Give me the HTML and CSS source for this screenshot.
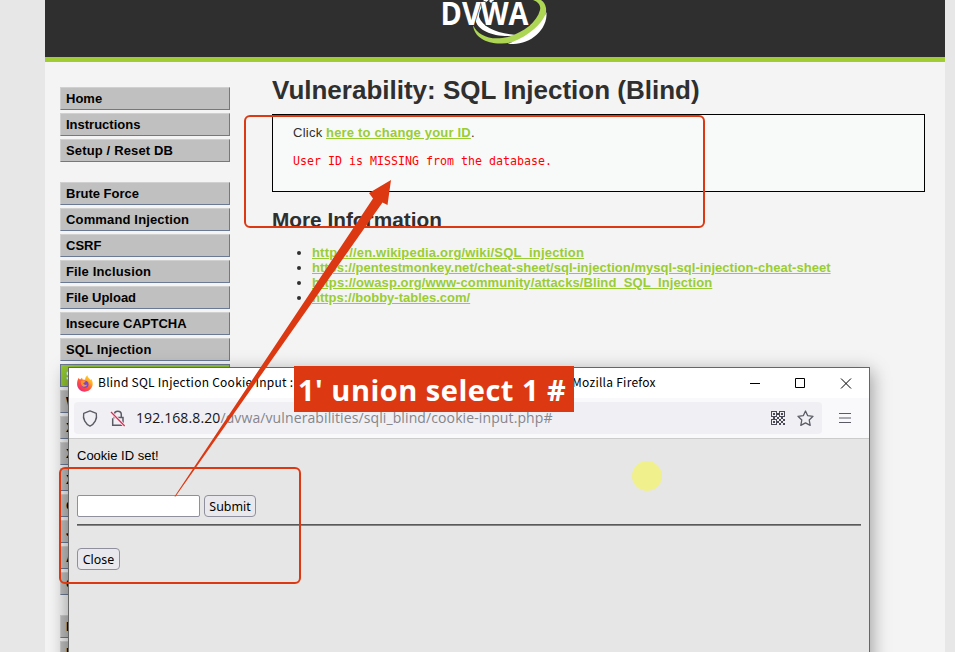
FILE: index.html
```html
<!DOCTYPE html>
<html lang="en">
<head>
<meta charset="utf-8">
<title>Vulnerability: SQL Injection (Blind)</title>
<link rel="stylesheet" href="styles.css">
</head>
<body>
<div class="container">
  <header class="header">
    <svg class="logo" width="120" height="50" viewBox="0 0 120 50">
      <path d="M34 22C37 31 54 39 79 35C58 35 41 28 37 17C37 10 41 4 48 -1L43 -1C36 6 33 14 34 22Z" fill="#fff"/>
      <path d="M31 25C32 37 44 44 60 43.500C84 43 106 26 104 8C103 4 102 2 99 0H91C97 2 99 6 98 10C95 22 82 32 66 37C49 41 36 36 31 25Z" fill="#acd653"/>
      <path d="M104.500 12C100 25 84 38 66 43.500C84 47 106 32 104.500 12Z" fill="#fff"/>
      <path d="M47 1L50 -2L52 1L49 3Z" fill="#fff"/>
      <text class="logo-text" x="-1.500" y="25" textLength="88" lengthAdjust="spacingAndGlyphs">DVWA</text>
    </svg>
  </header>
  <div class="columns">
    <nav class="menu">
      <ul>
        <li>Home</li><li>Instructions</li><li class="wide">Setup / Reset DB</li>
      </ul>
      <ul>
        <li>Brute Force</li><li class="wide">Command Injection</li><li>CSRF</li><li class="wide">File Inclusion</li><li>File Upload</li><li>Insecure CAPTCHA</li><li class="wide">SQL Injection</li><li class="selected">SQL Injection (Blind)</li><li>Weak Session IDs</li><li>XSS (DOM)</li><li>XSS (Reflected)</li><li>XSS (Stored)</li><li>CSP Bypass</li><li>JavaScript</li><li>Authorisation Bypass</li><li>Open HTTP Redirect</li>
      </ul>
      <ul>
        <li>DVWA Security</li><li>PHP Info</li>
      </ul>
    </nav>
    <main class="main">
      <h1>Vulnerability: SQL Injection (Blind)</h1>
      <div class="panel">
        <p><span class="click">Click</span> <a class="change">here to change your ID</a>.</p>
        <pre>User ID is MISSING from the database.</pre>
      </div>
      <h2>More Information</h2>
      <ul class="links">
        <li><a class="wiki">https://en.wikipedia.org/wiki/SQL_injection</a></li>
        <li><a class="monkey">https://pentestmonkey.net/cheat-sheet/sql-injection/mysql-sql-injection-cheat-sheet</a></li>
        <li><a class="owasp">https://owasp.org/www-community/attacks/Blind_SQL_Injection</a></li>
        <li><a>https://bobby-tables.com/</a></li>
      </ul>
    </main>
  </div>
</div>

<section class="window">
  <div class="titlebar">
    <svg class="firefox" width="16" height="17" viewBox="0 0 16 17">
      <defs><linearGradient id="fox" x1="1" y1="0" x2=".25" y2="1"><stop offset="0" stop-color="#ffe73d"/><stop offset=".35" stop-color="#ffae24"/><stop offset=".62" stop-color="#ff5638"/><stop offset="1" stop-color="#f0257b"/></linearGradient></defs>
      <path d="M1.4 3.1L3.1 4.5L5 2.7L5.6 4.5L8.2 4.7C8 3 9.2 1.3 10.5 .3C10.4 2.3 12.7 3.5 13.5 5L14.3 4C16.2 7 16.1 10.7 14.4 13.1C11.4 17.7 4.8 17.9 1.5 13.5C-.7 10.4 0 6.5 1.4 3.1Z" fill="url(#fox)"/>
      <circle cx="8" cy="9.2" r="3.5" fill="#7547dc"/>
      <path d="M3.7 6.3C6 5.2 7.5 6 8.8 6.7C8 7.9 6.8 7.2 6.3 8.3C7 10.2 9.4 10.2 10.3 9.3C9.6 12.8 5 12.4 4.1 9.2Z" fill="#ff9526"/>
    </svg>
    <span class="title-start">Blind SQL Injection Cookie Input :</span><span class="title-end">Mozilla Firefox</span>
    <svg class="controls" width="102" height="12" viewBox="0 0 102 12" fill="none" stroke="#000">
      <path d="M0 6.500H10M45.500 1.500H54.500V10.500H45.500ZM91 1.500L101 11.500M101 1.500L91 11.500"/>
    </svg>
  </div>
  <div class="toolbar">
    <div class="urlbar">
      <svg class="shield" width="16" height="17" viewBox="0 0 16 17" fill="none" stroke="#5b5b66" stroke-width="1.4"><path d="M8 .9L14.300 3.300C15.500 9 12.300 14.300 8 16.100C3.700 14.300 .5 9 1.700 3.300Z" stroke-linejoin="round"/></svg>
      <svg class="lock" width="16" height="17" viewBox="0 0 16 17" fill="none" stroke="#5b5b66" stroke-width="1.500"><path d="M4.300 7V4.500C4.300 0 11.300 0 11.300 4.500V7M3.500 7.500H13V15.300H2.700V8.300"/><path d="M1 2L14.700 16" stroke="#f0f0f4" stroke-width="3"/><path d="M1 2L14.700 16" stroke="#e22850" stroke-width="1.200"/></svg>
      <span class="url"><b>192.168.8.20</b>/dvwa/vulnerabilities/sqli_blind/cookie-input.php#</span>
      <svg class="qr" width="14" height="14" viewBox="0 0 14 14" fill="#4a4a55"><path fill-rule="evenodd" d="M0 0H6V6H0ZM1 1V5H5V1ZM8 0H14V6H8ZM9 1V5H13V1ZM0 8H6V14H0ZM1 9V13H5V9Z"/><path d="M2 2h2v2H2zM10 2h2v2h-2zM2 10h2v2H2zM6 2h2v2H6zM2 6h2v2H2zM6 6h2v2H6zM8 8h2v2H8zM10 6h2v2h-2zM12 8h2v2h-2zM10 10h2v2h-2zM12 12h2v2h-2zM8 12h2v2H8zM6 10h2v2H6z"/></svg>
      <svg class="star" width="17" height="17" viewBox="0 0 17 17" fill="none" stroke="#5b5b66" stroke-width="1.300" stroke-linejoin="round"><path d="M8.500 1L10.600 5.600L16 6.300L12.200 10L13.200 15.400L8.500 12.900L3.800 15.400L4.800 10L1 6.300L6.400 5.600Z"/></svg>
    </div>
    <svg class="burger" width="12" height="10" viewBox="0 0 12 10" stroke="#5b5b66"><path d="M0 .5H12M0 5H12M0 9.500H12"/></svg>
  </div>
  <div class="page">
    <div class="message">Cookie ID set!</div>
    <form class="form"><input type="text"><button type="button">Submit</button></form>
    <div class="rule"></div>
    <button type="button">Close</button>
  </div>
</section>

<div class="spot"></div>
<div class="frame frame-result"></div>
<div class="frame frame-input"></div>
<svg class="arrow" width="955" height="652" viewBox="0 0 955 652"><path d="M174.500 496.500L373 198.500L369 193L391 180L387.500 205L382.500 202.500L175.500 496.500Z" fill="#dc3912"/></svg>
<div class="label"><span>1' union select 1 #</span></div>
</body>
</html>
```
FILE: styles.css
```css
* { box-sizing: border-box; }
body { margin: 0; height: 652px; overflow: hidden; position: relative; background: #e7e7e7; font-family: "Liberation Sans", Arial, sans-serif; font-size: 13px; color: #2f2f2f; }
ul, h1, h2, p, pre { margin: 0; padding: 0; }
.container { width: 900px; height: 652px; margin-left: 45px; background: #f4f4f4; overflow: hidden; }
.header { height: 62px; background: #2f2f2f; border-bottom: 5px solid #a1cc33; padding-left: 397px; }
.logo { display: block; overflow: visible; }
.logo-text { font: bold 32px "Open Sans", sans-serif; fill: #fff; stroke: #2f2f2f; stroke-width: 1.5px; paint-order: stroke; }
.columns { display: flex; align-items: flex-start; padding-left: 15px; }
.menu { width: 170px; padding-top: 25px; flex: none; }
.menu ul { list-style: none; margin-bottom: 20px; display: flex; flex-direction: column; gap: 3px; }
.menu li { height: 23px; line-height: 22px; padding-left: 5px; background: #c0c0c0; border: 1px solid; border-color: #d0d0d0 #6b7a94 #6b7a94 #d0d0d0; font-weight: bold; color: #000; white-space: nowrap; }
.menu .wide { letter-spacing: .15px; }
.menu .selected { background: #94c832; border-color: #6b7a94; color: #fff; }
.main { width: 653px; margin-left: 42px; padding-top: 12px; }
h1 { font-size: 26px; line-height: 32px; white-space: nowrap; }
.panel { margin-top: 8px; height: 78px; border: 1px solid #000; background: #f8fafa; padding: 10px 20px; }
.panel p { line-height: 15px; }
.click { letter-spacing: .25px; }
.change { letter-spacing: .18px; }
pre { font: 11.63px/15px "DejaVu Sans Mono", monospace; margin-top: 14px; color: #f00; }
a { color: #9acc33; font-weight: bold; text-decoration: underline; }
h2 { font-size: 20.8px; line-height: 24px; margin-top: 16px; }
.links { margin-top: 13px; padding-left: 40px; line-height: 15px; white-space: nowrap; }
.wiki { letter-spacing: .18px; }
.monkey { letter-spacing: .037px; }
.owasp { letter-spacing: .088px; }
.window { position: absolute; left: 68px; top: 367px; width: 802px; height: 300px; border: 1px solid #666; background: #e6e6e6; box-shadow: 0 6px 17px 2px rgba(0,0,0,.36); color: #000; }
.titlebar { height: 30px; background: #fff; display: flex; align-items: center; padding: 0 17px 0 8px; font: 12px/18px "Noto Sans CJK SC", sans-serif; white-space: nowrap; }
.title-start, .title-end { height: 20px; }
.title-start { width: 196px; margin-left: 5px; letter-spacing: .25px; }
.title-end { margin-left: 278px; letter-spacing: .25px; }
.controls { margin-left: auto; }
.toolbar { height: 41px; background: #f9f9fb; border-bottom: 1px solid #ccc; display: flex; padding: 4px 18px 4px 5px; align-items: center; }
.urlbar { width: 748px; height: 32px; background: #f0f0f4; border-radius: 4px; display: flex; align-items: center; padding: 0 8px; }
.lock { margin-left: 12px; }
.url { margin-left: 10px; padding-bottom: 2px; font: 14px "Open Sans", sans-serif; letter-spacing: .11px; color: #85858c; white-space: nowrap; }
.url b { font-weight: normal; color: #15141a; }
.qr { margin-left: auto; }
.star { margin-left: 12px; }
.burger { margin-left: auto; }
.page { padding: 9px 8px; }
.message { line-height: 15px; }
.form { display: flex; gap: 4px; margin-top: 32px; }
input { width: 123px; height: 22px; border: 1px solid #8f8f9d; border-radius: 2px; background: #fff; padding: 0; }
button { display: block; height: 22px; border: 1px solid #8f8f9d; border-radius: 4px; background: #e9e9ed; padding: 0; text-align: center; font: 12.4px "Noto Sans", sans-serif; color: #000; line-height: 19px; }
.form button { width: 52px; }
.rule { height: 2px; margin: 7px 0 22px; background: #5a5a5a; border-bottom: 1px solid #858585; }
.page > button { width: 43px; }
.spot { position: absolute; left: 632px; top: 461px; width: 30px; height: 30px; border-radius: 50%; background: #f0f08c; }
.frame { position: absolute; border: 2px solid #dc3912; border-radius: 6px; }
.frame-result { left: 244px; top: 115px; width: 461px; height: 113px; }
.frame-input { left: 59px; top: 467px; width: 242px; height: 117px; }
.arrow { position: absolute; left: 0; top: 0; }
.label { position: absolute; left: 294px; top: 366px; width: 280px; height: 46px; background: #dc3912; color: #fff; font: bold 29px/48px "Open Sans", sans-serif; letter-spacing: .5px; padding-left: 4px; white-space: nowrap; }
```
